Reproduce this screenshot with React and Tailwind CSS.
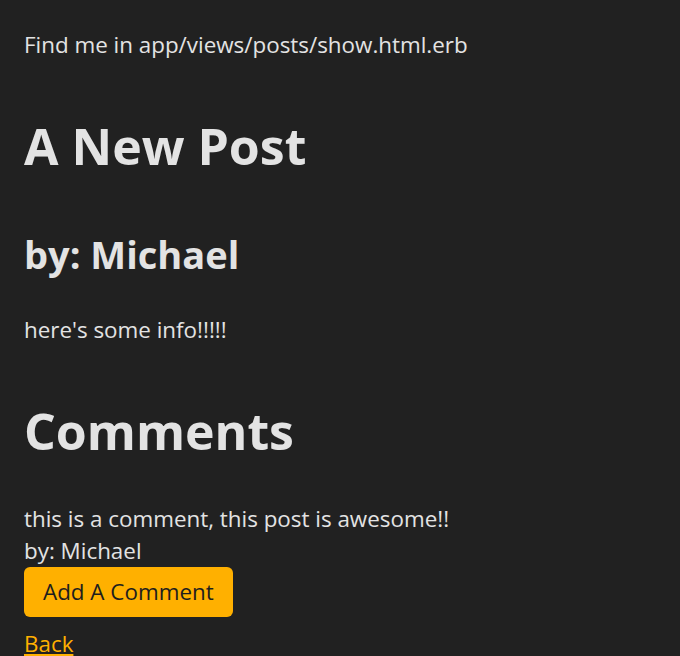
import React from 'react';

export default function App() {
  return (
    <div className="min-h-screen bg-[#212121] text-[#e3e3e3] px-6 pt-[29px] text-[22.4px] leading-[32px]" style={{ fontFamily: '"Open Sans", sans-serif' }}>
      <p>Find me in app/views/posts/show.html.erb</p>

      <h1 className="mt-[55px] text-[50px] font-bold leading-[60px]">A New Post</h1>
      <h2 className="mt-[55px] text-[38px] font-bold leading-[46px]">by: Michael</h2>
      <p className="mt-[37px]">here's some info!!!!!</p>

      <h1 className="mt-[55px] text-[50px] font-bold leading-[60px]">Comments</h1>

      <div className="mt-[42px]">
        <p>this is a comment, this post is awesome!!</p>
        <p>by: Michael</p>
      </div>

      <button className="h-[50px] px-[19px] rounded-md bg-[#ffb000] text-[#1e1e1e] text-[22.4px]">
        Add A Comment
      </button>

      <div className="mt-[11px]">
        <a href="#" className="text-[#ffb000] underline">Back</a>
      </div>
    </div>
  );
}
